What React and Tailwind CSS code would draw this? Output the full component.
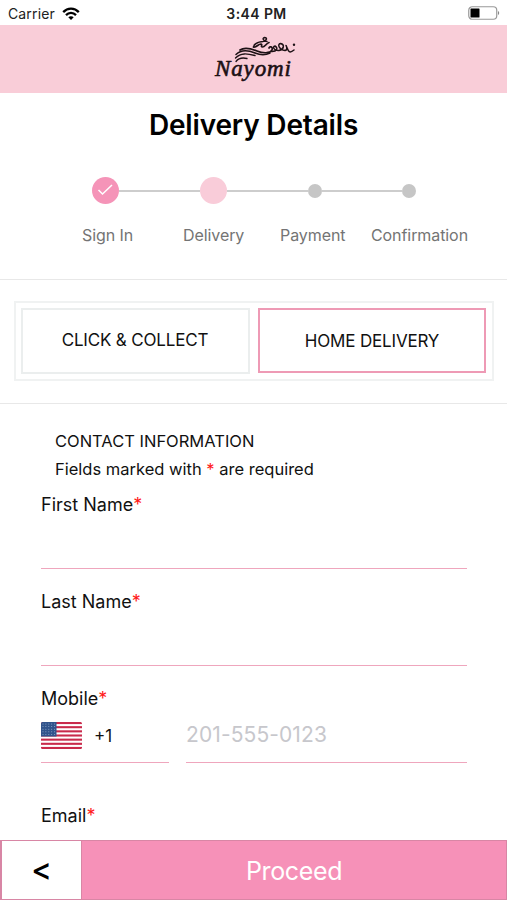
import { useState } from "react";
import { clsx } from "clsx";

const STEPS = [
  { label: "Sign In", state: "done" },
  { label: "Delivery", state: "current" },
  { label: "Payment", state: "todo" },
  { label: "Confirmation", state: "todo" },
];

function StatusBar() {
  return (
    <div className="h-[25px] shrink-0 grid grid-cols-3 items-center pl-2 pr-[7px] pt-[2px] text-[#222]">
      <div className="flex items-center gap-[7px] text-[14px] tracking-[0.14px]">
        Carrier
        <svg width="18" height="14" viewBox="0 0 18 14" fill="none" stroke="#000" strokeWidth="2.3">
          <path d="M1.2 5.1C5.5.5 12.5.5 16.8 5.1" />
          <path d="M4 8.1c2.8-2.9 7.2-2.9 10 0" />
          <path d="M6.3 10.3c1.5-1.5 3.9-1.5 5.4 0L9 13z" fill="#000" stroke="none" />
        </svg>
      </div>
      <div className="pl-[5px] text-center text-[14px] font-semibold tracking-[0.4px] whitespace-nowrap">3:44 PM</div>
      <svg className="justify-self-end -mt-px" width="32" height="14" viewBox="0 0 32 14" fill="none">
        <rect x=".75" y=".75" width="28" height="12.5" rx="3.5" stroke="#999" strokeWidth="1.2" />
        <rect x="2.5" y="2.5" width="9" height="9" rx=".5" fill="#000" />
        <path d="M30 5c1.6.5 1.6 3.5 0 4z" fill="#888" />
      </svg>
    </div>
  );
}

function Logo() {
  return (
    <svg width="90" height="50" viewBox="0 0 90 50" fill="none" stroke="#1d1115" strokeLinecap="round" strokeLinejoin="round">
      {/* brush strokes */}
      <path d="M31 16C36 12.500 42 14.500 48 17C54 19.500 61 19.500 63 16C64 13 61.500 11.500 60 14" strokeWidth="1.700" />
      <path d="M27 20.500C33 14.500 40 16.500 46 19C51 21 57 21 61 19" strokeWidth="1.500" />
      <path d="M26.500 24C32 18.500 38 19.500 46 21.500" strokeWidth="1.400" />
      <path d="M27 27.500C30 23.500 34 23.500 38 24.500" strokeWidth="1.300" />
      {/* calligraphy */}
      <path d="M58 7.500C54 7 53 4 55.500 3.500C58.500 3.500 58 7 54 7.500C49 8 45 10 44.500 13" strokeWidth="1.500" />
      <path d="M44.500 13C48 13.500 49 10 52 10C54 10.500 51 13 53.500 13C56 13 57 9.500 60 8.500" strokeWidth="1.700" />
      <path d="M62 17.500C68 18 69.500 14 66 12C63 12.500 65 17 70 16.500C75 15.500 76 10.500 71.500 9.500C68 10 70 16 76 16.500C79 16 77.500 12.500 77 11.500C79 15 79 21 85 16" strokeWidth="1.500" />
      <circle cx="85" cy="10.700" r="1.200" fill="#1d1115" stroke="none" />
      <text
        x="6"
        y="42"
        textLength="76"
        fill="#1d1115"
        strokeWidth=".6"
        className="font-['Liberation_Serif',serif] text-[23px] italic"
      >
        Nayomi
      </text>
    </svg>
  );
}

function StepDot({ state }) {
  if (state === "todo") {
    return <span className="size-[14px] rounded-full bg-[#c6c6c6]" />;
  }
  return (
    <span
      className={clsx(
        "size-[27px] rounded-full flex items-center justify-center",
        state === "done" ? "bg-[#f594b8]" : "bg-[#f9ccd9]"
      )}
    >
      {state === "done" && (
        <svg width="17" height="13" viewBox="0 0 17 13" fill="none" stroke="#fff" strokeWidth="1.5">
          <path d="M1.500 6L5.500 10L15 1" />
        </svg>
      )}
    </span>
  );
}

function Stepper() {
  return (
    <div className="text-[#747474]">
      <div className="flex items-center h-[27px] pl-[92px]">
        <StepDot state={STEPS[0].state} />
        <span className="w-[81px] h-[2px] bg-[#cdcdcd]" />
        <StepDot state={STEPS[1].state} />
        <span className="w-[81px] h-[2px] bg-[#cdcdcd]" />
        <StepDot state={STEPS[2].state} />
        <span className="w-[80px] h-[2px] bg-[#cdcdcd]" />
        <StepDot state={STEPS[3].state} />
      </div>
      <div className="mt-[21px] h-[20px] flex text-[16px] leading-[20px] tracking-[-0.08px] whitespace-nowrap">
        <span className="ml-[82px] w-[101px]">{STEPS[0].label}</span>
        <span className="w-[97px]">{STEPS[1].label}</span>
        <span className="w-[91px]">{STEPS[2].label}</span>
        <span>{STEPS[3].label}</span>
      </div>
    </div>
  );
}

function Required() {
  return <span className="text-[#ff1a1a]">*</span>;
}

function Field({ label }) {
  return (
    <label className="block h-[97px]">
      <span className="block text-[18px] leading-[24px]">
        {label}
        <Required />
      </span>
      <input className="block w-full h-[52px] border-b border-[#efa6bd] outline-none" />
    </label>
  );
}

function UsFlag() {
  return (
    <svg className="-mt-[2px]" width="41" height="27" viewBox="0 0 41 27">
      <clipPath id="flag">
        <rect width="41" height="27" rx="1.500" />
      </clipPath>
      <g clipPath="url(#flag)">
        <rect width="41" height="27" fill="#fff" />
        {[0, 2, 4, 6, 8, 10, 12].map((i) => (
          <rect key={i} y={(i * 27) / 13} width="41" height={27 / 13} fill="#c92a4b" />
        ))}
        <rect width="15.500" height="14.500" fill="#31548c" />
        {[2, 4.6, 7.2, 9.8, 12.4].map((y) =>
          [2, 4.9, 7.8, 10.7, 13.6].map((x) => <circle key={`${x}-${y}`} cx={x} cy={y} r=".5" fill="#9bb0cf" />)
        )}
      </g>
    </svg>
  );
}

export default function App() {
  const [method, setMethod] = useState("home");

  return (
    <div className="w-[507px] h-[900px] overflow-hidden flex flex-col bg-white text-[#111] font-[Inter,sans-serif]">
      <StatusBar />
      <header className="h-[68px] shrink-0 bg-[#f9cdd8] flex justify-center pt-[9px]">
        <Logo />
      </header>

      <h1 className="mt-[14px] h-[36px] text-center text-[28px] leading-[36px] tracking-[-0.17px] font-semibold text-black">
        Delivery Details
      </h1>
      <div className="mt-[34px] h-[103px] shrink-0 border-b border-[#e8e8e8]">
        <Stepper />
      </div>

      <div className="h-[124px] shrink-0 border-b border-[#e8e8e8] pt-[21px] pl-[14px]">
        <div className="w-[480px] h-[80px] border-2 border-[#f0f2f2] p-[5px] flex gap-2 text-[17px]">
          <button
            onClick={() => setMethod("collect")}
            className={clsx(
              "w-[229px] h-[66px] border-2 pr-[1px] tracking-[-0.17px]",
              method === "collect" ? "border-[#ee9ab5]" : "border-[#ebeeee]"
            )}
          >
            CLICK &amp; COLLECT
          </button>
          <button
            onClick={() => setMethod("home")}
            className={clsx(
              "w-[228px] h-[65px] border-2 pt-[2px] tracking-[-0.17px]",
              method === "home" ? "border-[#ee9ab5]" : "border-[#ebeeee]"
            )}
          >
            HOME DELIVERY
          </button>
        </div>
      </div>

      <form className="h-[436px] shrink-0 overflow-hidden pt-[23px] pl-[41px] pr-[40px]">
        <div className="pl-[14px] h-[66px] text-[16.5px] leading-[28px]">
          <p>CONTACT INFORMATION</p>
          <p>
            Fields marked with <Required /> are required
          </p>
        </div>
        <Field label="First Name" />
        <Field label="Last Name" />
        <div className="h-[117px]">
          <div className="text-[18px] leading-[24px]">
            Mobile
            <Required />
          </div>
          <div className="flex gap-[17px]">
            <div className="w-[128px] h-[52px] border-b border-[#efa6bd] flex items-center gap-[12px] text-[17px]">
              <UsFlag />
              +1
            </div>
            <input
              placeholder="201-555-0123"
              className="w-[281px] h-[52px] pb-[4px] border-b border-[#efa6bd] text-[21px] tracking-[0.1px] placeholder:text-[#c7c7cc] outline-none"
            />
          </div>
        </div>
        <Field label="Email" />
      </form>

      <div className="h-[60px] shrink-0 flex border border-[#d886a5] bg-[#f691b8]">
        <button className="w-[81px] pb-[2px] bg-white border-r border-l border-[#d886a5] text-[31px] font-medium text-black">
          &lt;
        </button>
        <button className="flex-1 pt-[3px] text-white text-[25px] tracking-[-0.35px]">Proceed</button>
      </div>
    </div>
  );
}
